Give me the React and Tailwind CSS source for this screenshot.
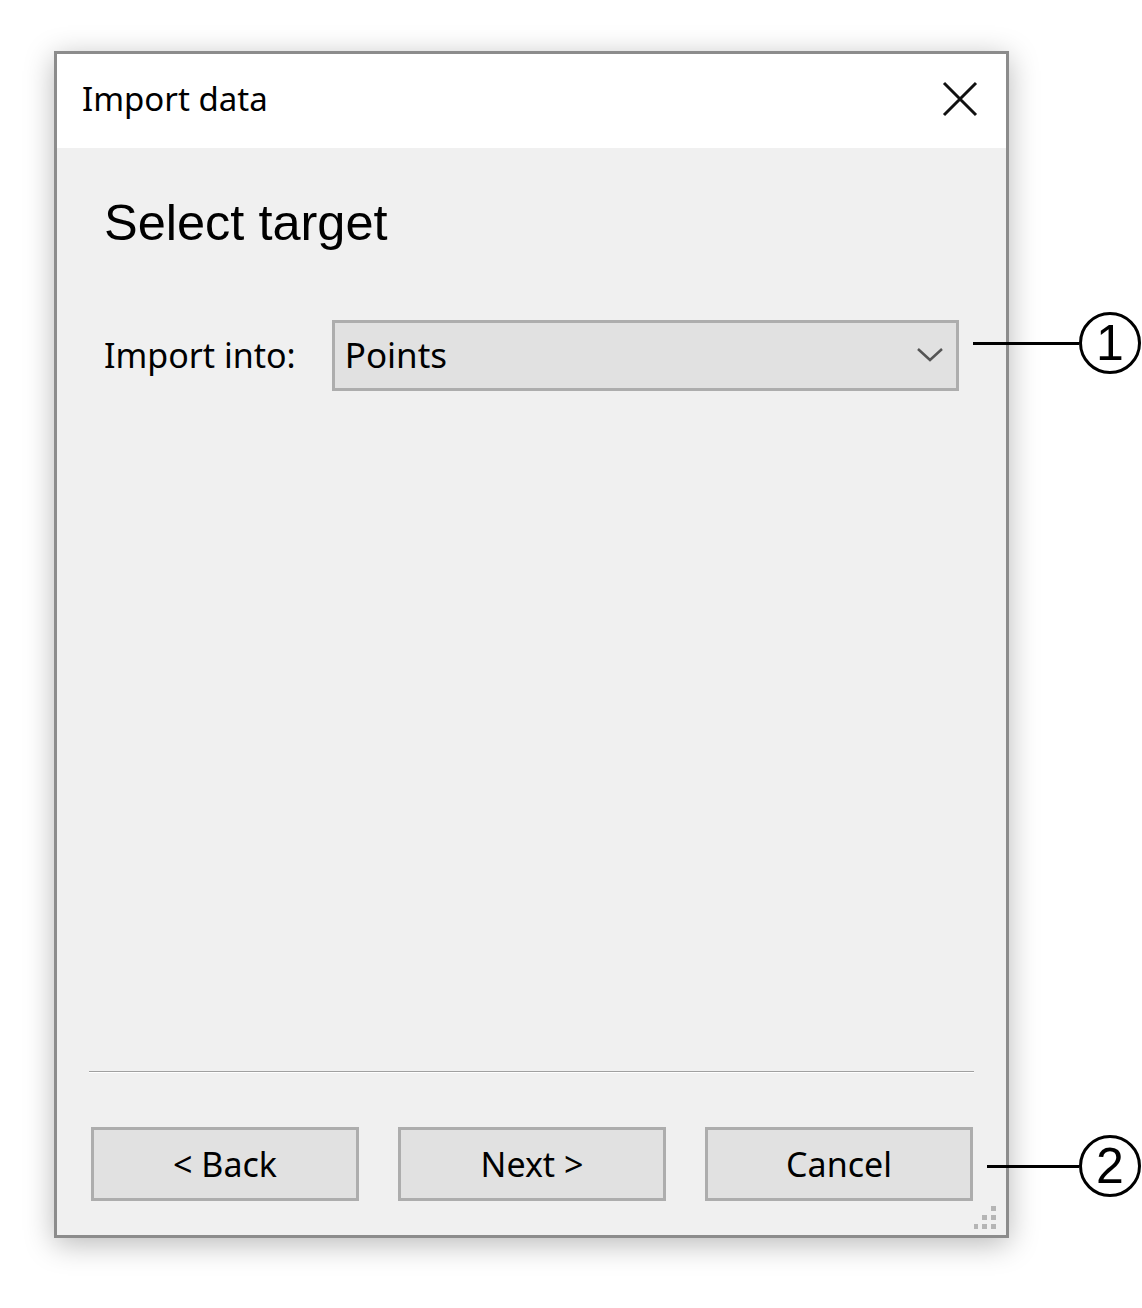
import React from "react";

const ui = { fontFamily: '"Noto Sans", "Open Sans", sans-serif' };
const arial = { fontFamily: '"Liberation Sans", Arial, sans-serif' };

function Callout({ n, top, lineLeft, lineWidth }) {
  return (
    <div className="absolute flex items-center" style={{ top, left: lineLeft }}>
      <div className="h-[3px] bg-black" style={{ width: lineWidth }} />
      <div
        className="w-[62px] h-[62px] rounded-full border-[3px] border-black flex items-center justify-center text-[50px] leading-none text-black"
        style={arial}
      >
        {n}
      </div>
    </div>
  );
}

function Btn({ children }) {
  return (
    <div
      className="w-[268px] h-[74px] bg-[#e1e1e1] border-[3px] border-[#adadad] flex items-center justify-center text-[34px] text-black"
      style={ui}
    >
      {children}
    </div>
  );
}

export default function App() {
  return (
    <div className="relative w-[1142px] h-[1308px] bg-white overflow-hidden">
      <div className="pt-[51px] pl-[54px]">
        <div className="w-[955px] h-[1187px] border-[3px] border-[#8c8c8c] bg-[#f0f0f0] shadow-[0_6px_28px_rgba(0,0,0,0.28)] flex flex-col relative">
          <div className="h-[94px] bg-white flex items-center justify-between pl-[25px] pr-[28px] shrink-0">
            <span className="text-[33px] text-black mt-[-4px]" style={ui}>Import data</span>
            <svg width="36" height="36" viewBox="0 0 36 36" className="mt-[-4px]">
              <path d="M2 2 L34 34 M34 2 L2 34" stroke="#111" strokeWidth="3" />
            </svg>
          </div>
          <div className="flex-1 flex flex-col px-[47px]">
            <div className="mt-[50px] text-[50.5px] leading-none text-black" style={arial}>Select target</div>
            <div className="mt-[71px] flex items-center">
              <span className="w-[228px] text-[34px] text-black" style={ui}>Import into:</span>
              <div className="w-[628px] h-[71px] bg-[#e1e1e1] border-[3px] border-[#adadad] flex items-center justify-between pl-[10px] pr-[12px]">
                <span className="text-[35px] text-black" style={ui}>Points</span>
                <svg width="28" height="16" viewBox="0 0 28 16">
                  <path d="M2 2 L14 13 L26 2" fill="none" stroke="#555" strokeWidth="2.5" />
                </svg>
              </div>
            </div>
            <div className="flex-1" />
          </div>
          <div className="mx-[32px] h-[2px] bg-[#a0a0a0] border-b border-white shrink-0" />
          <div className="flex justify-between pl-[34px] pr-[33px] pt-[54px] pb-[34px]">
            <Btn>&lt; Back</Btn>
            <Btn>Next &gt;</Btn>
            <Btn>Cancel</Btn>
          </div>
          <svg width="24" height="24" viewBox="0 0 24 24" className="absolute right-[8px] bottom-[6px]">
            <g fill="#b5b5b5">
              <rect x="17" y="1" width="5" height="5" />
              <rect x="8" y="10" width="5" height="5" />
              <rect x="17" y="10" width="5" height="5" />
              <rect x="-1" y="19" width="5" height="5" />
              <rect x="8" y="19" width="5" height="5" />
              <rect x="17" y="19" width="5" height="5" />
            </g>
          </svg>
        </div>
      </div>
      <Callout n="1" top={312} lineLeft={973} lineWidth={106} />
      <Callout n="2" top={1135} lineLeft={987} lineWidth={92} />
    </div>
  );
}
